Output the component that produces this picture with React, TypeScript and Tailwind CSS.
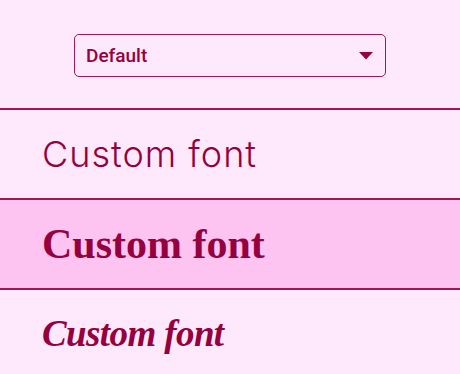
export default function App() {
  return (
    <div className="min-h-screen bg-[#fde9fb] text-[#95003f]">
      <div className="h-[108px] pt-[34px]">
        <div className="mx-auto flex h-[43px] w-[312px] items-center justify-between rounded-[5px] border-[1.5px] border-[#a3164e] pl-[11px] pr-[12px]">
          <span className="text-[19px] font-medium leading-none" style={{ fontFamily: 'Roboto, sans-serif' }}>
            Default
          </span>
          <svg width="14" height="8" viewBox="0 0 14 8">
            <path d="M0 0 L14 0 L7 7.5 Z" fill="#95003f" />
          </svg>
        </div>
      </div>
      <div className="flex h-[90px] items-center border-t-2 border-[#a3164e] pl-[42px]">
        <span className="text-[36px] font-light tracking-[1px]" style={{ fontFamily: 'Inter, sans-serif' }}>
          Custom font
        </span>
      </div>
      <div className="flex h-[90px] items-center border-t-2 border-[#a3164e] bg-[#fdc3f1] pl-[42px]">
        <span className="text-[42px] font-bold" style={{ fontFamily: '"Liberation Serif", serif' }}>
          Custom font
        </span>
      </div>
      <div className="flex h-[90px] items-center border-t-2 border-[#a3164e] pl-[42px]">
        <span className="text-[37px] font-bold italic tracking-[-0.6px]" style={{ fontFamily: '"Liberation Serif", serif' }}>
          Custom font
        </span>
      </div>
    </div>
  );
}
